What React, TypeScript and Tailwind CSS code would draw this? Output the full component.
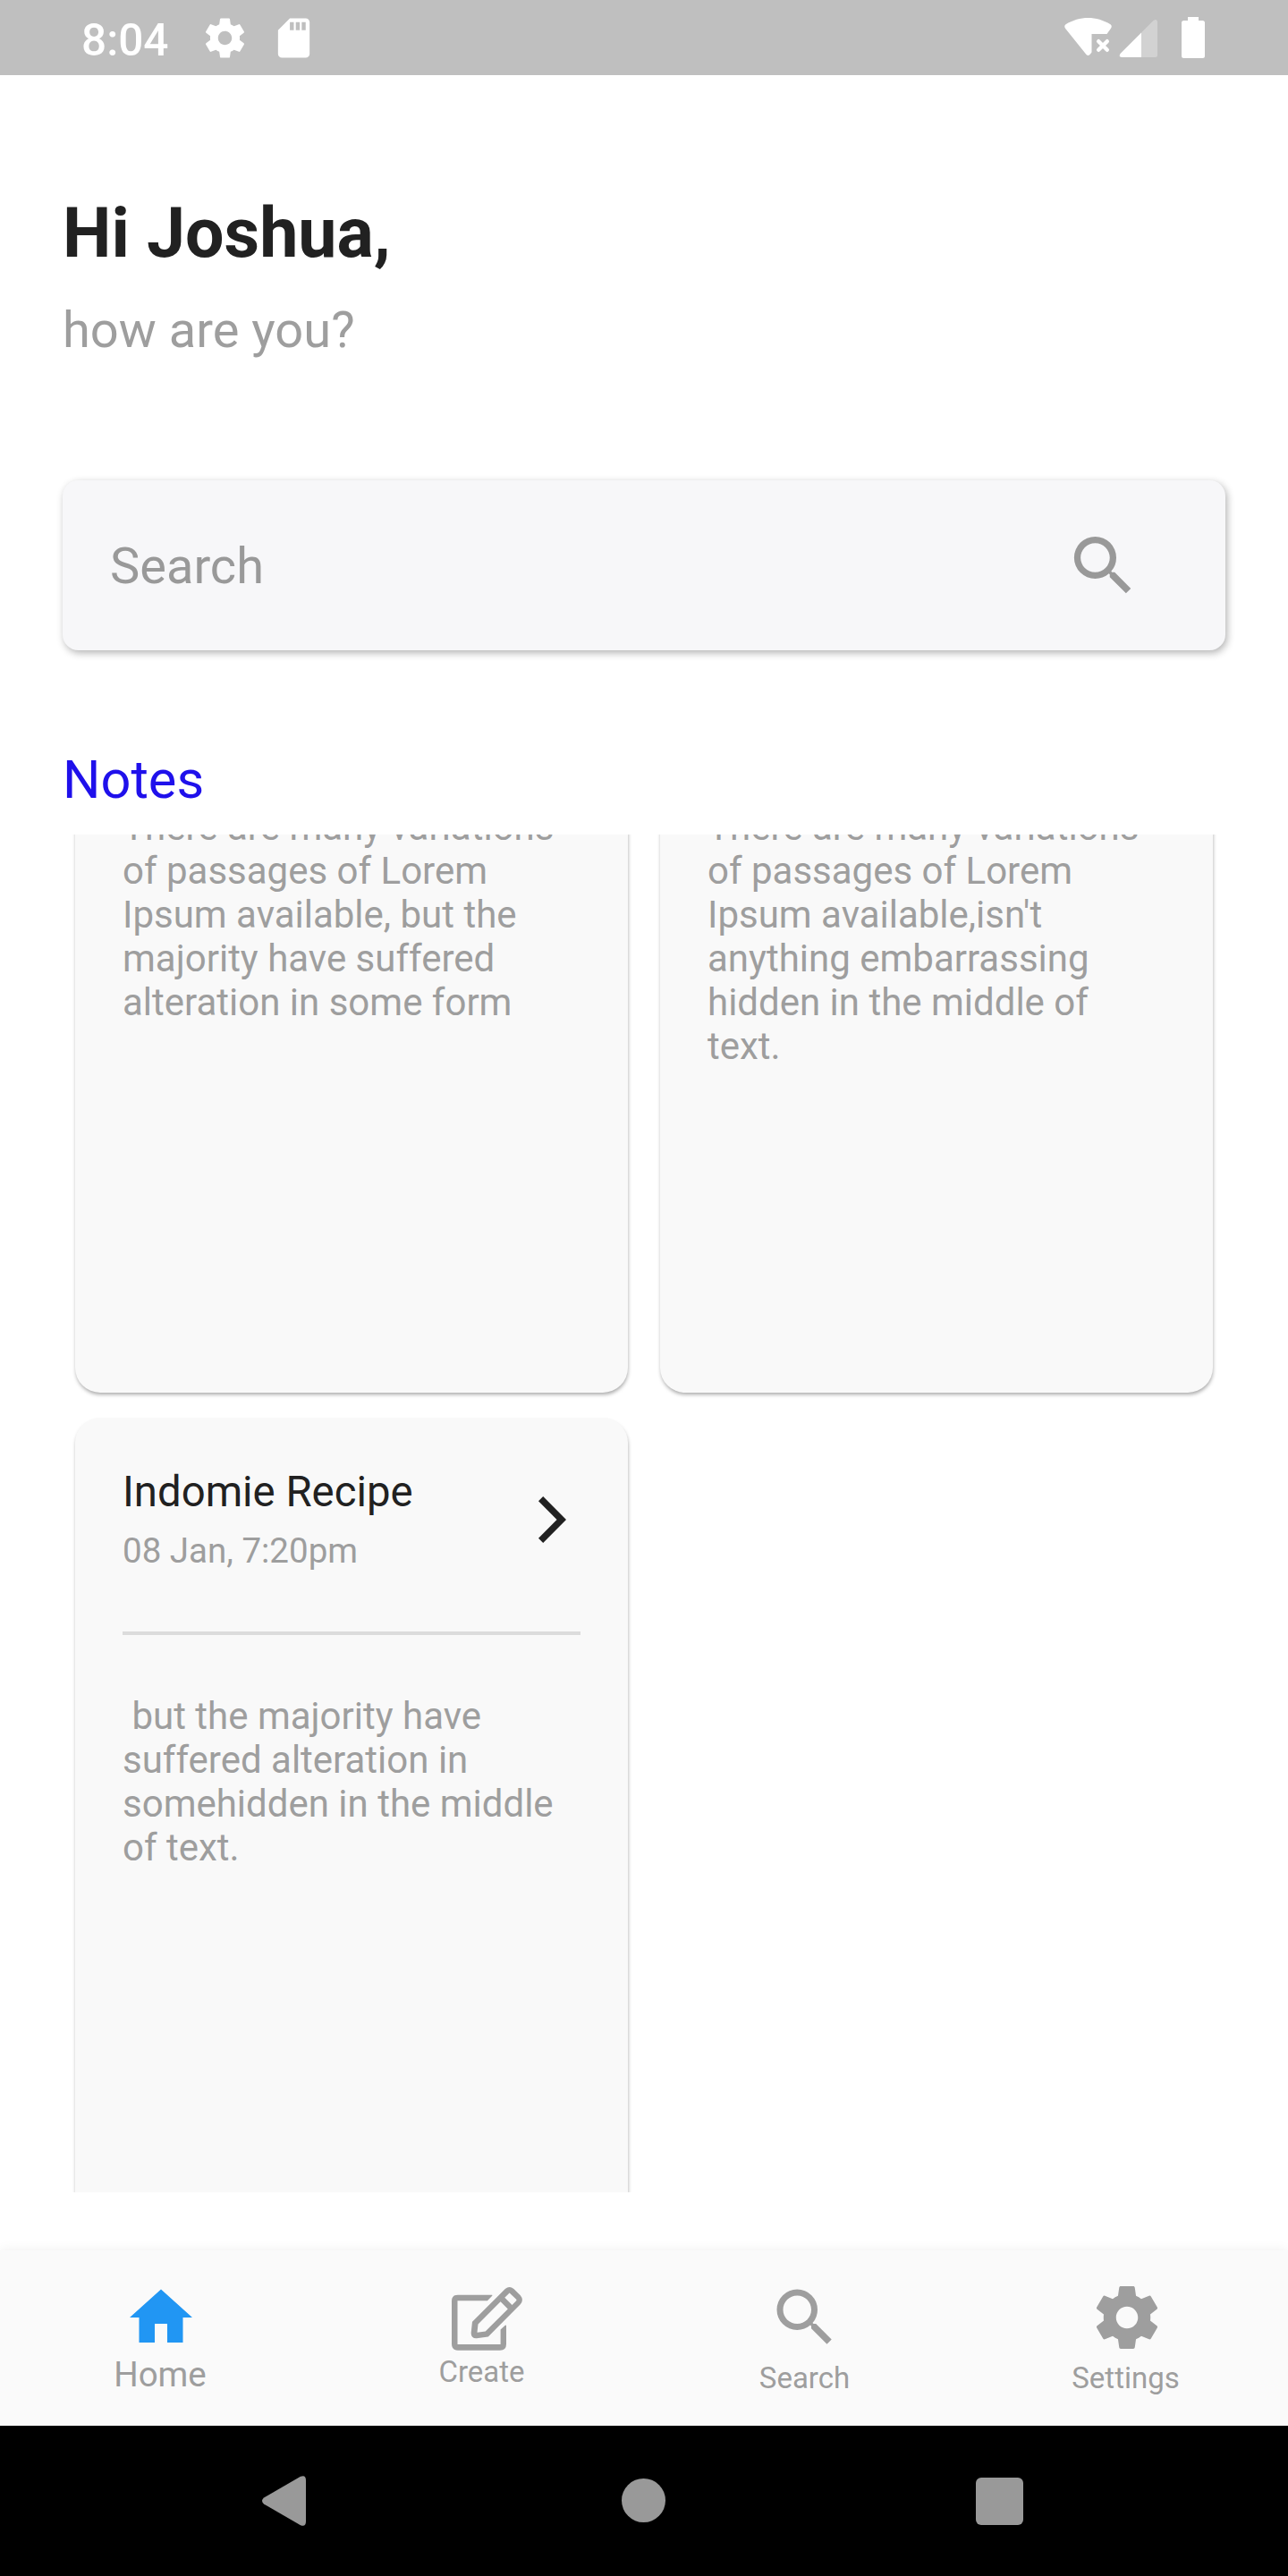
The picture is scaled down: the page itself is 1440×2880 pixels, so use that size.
import type { ReactNode } from 'react';
import { MdHome, MdSearch } from 'react-icons/md';

const GEAR =
  'M19.43 12.98c.04-.32.07-.64.07-.98s-.03-.66-.07-.98l2.11-1.65c.19-.15.24-.42.12-.64l-2-3.46c-.12-.22-.39-.3-.61-.22l-2.49 1c-.52-.4-1.08-.73-1.69-.98l-.38-2.65C14.46 2.18 14.25 2 14 2h-4c-.25 0-.46.18-.49.42l-.38 2.65c-.61.25-1.17.59-1.69.98l-2.49-1c-.23-.09-.49 0-.61.22l-2 3.46c-.13.22-.07.49.12.64l2.11 1.65c-.04.32-.07.65-.07.98s.03.66.07.98l-2.11 1.65c-.19.15-.24.42-.12.64l2 3.46c.12.22.39.3.61.22l2.49-1c.52.4 1.08.73 1.69.98l.38 2.65c.03.24.24.42.49.42h4c.25 0 .46-.18.49-.42l.38-2.65c.61-.25 1.17-.59 1.69-.98l2.49 1c.23.09.49 0 .61-.22l2-3.46c.12-.22.07-.49-.12-.64l-2.11-1.65zM12 15.5c-1.93 0-3.5-1.57-3.5-3.5s1.57-3.5 3.5-3.5 3.5 1.57 3.5 3.5-1.57 3.5-3.5 3.5z';

function GearIcon({ className }: { className: string }) {
  return (
    <svg viewBox="0 0 24 24" fill="currentColor" className={className}>
      <path d={GEAR} />
    </svg>
  );
}

function StatusBar() {
  return (
    <header className="flex h-[84px] shrink-0 items-start bg-[#bfbfbf] text-white">
      <span className="mt-[16px] ml-[91px] w-[97px] text-[49.500px] leading-[58px] font-medium whitespace-nowrap">8:04</span>
      <GearIcon className="mt-[16px] ml-[37px] size-[53px]" />
      <svg viewBox="0 0 24 24" fill="currentColor" className="mt-[16px] ml-[24px] size-[53px]">
        <path d="M18 2h-8L4.02 8 4 20c0 1.1.9 2 2 2h12c1.1 0 2-.9 2-2V4c0-1.1-.9-2-2-2zm-6 6h-2V4h2v4zm3 0h-2V4h2v4zm3 0h-2V4h2v4z" />
      </svg>
      <div className="mt-[19px] mr-[93px] ml-auto flex items-start">
        <svg viewBox="0 0 54 46" fill="currentColor" className="h-[46px] w-[54px]">
          <path d="M1.2 13C-.2 11 0 9.600 1.500 8.300C9 3.500 18 1 26.500 1C35 1 44 3.500 51.500 8.300C53 9.600 53.200 11 51.800 13L47.500 19H30.500V39.500L28.500 42Q26.500 44 24.500 42Z" />
          <path d="M38.200 27.200L47.800 36.800M47.800 27.200L38.200 36.800" stroke="currentColor" strokeWidth="4.400" strokeLinecap="round" />
        </svg>
        <svg viewBox="0 0 44 46" fill="currentColor" className="ml-[7px] h-[46px] w-[44px]">
          <path d="M25 17.600L38.500 4.100Q42 1.500 43 5V42.500Q43 45 40.500 45H25Z" opacity="0.300" />
          <path d="M25 17.600V45H3Q-.5 44.500 1.500 41.100Z" />
        </svg>
        <svg viewBox="0 0 26 46" fill="currentColor" className="ml-[26px] h-[46px] w-[26px]">
          <path d="M7 0H19V4H23.500Q26 4 26 6.500V43.500Q26 46 23.500 46H2.500Q0 46 0 43.500V6.500Q0 4 2.500 4H7Z" />
        </svg>
      </div>
    </header>
  );
}

type Note = { title?: string; date?: string; lines: string[] };

const notes: Note[] = [
  {
    lines: ['There are many variations', 'of passages of Lorem', 'Ipsum available, but the', 'majority have suffered', 'alteration in some form'],
  },
  {
    lines: ['There are many variations', 'of passages of Lorem', "Ipsum available,isn't", 'anything embarrassing', 'hidden in the middle of', 'text.'],
  },
  {
    title: 'Indomie Recipe',
    date: '08 Jan, 7:20pm',
    lines: [' but the majority have', 'suffered alteration in', 'somehidden in the middle', 'of text.'],
  },
];

function NoteCard({ note }: { note: Note }) {
  return (
    <article className="h-[966px] rounded-[28px] bg-[#f9f9f9] px-[53px] pt-[53px] shadow-[0.500px_3px_4px_-1px_rgba(0,0,0,0.35)]">
      <div className="flex h-[119px] items-center justify-between">
        <div>
          <h3 className="mt-px text-[47.300px] leading-[58px] whitespace-nowrap text-[#212121]">{note.title}</h3>
          <p className="mt-[14px] text-[38.500px] leading-[46px] whitespace-nowrap text-[#9e9e9e]">{note.date}</p>
        </div>
        <svg viewBox="0 0 31 52" fill="#212121" className="mt-[3px] mr-[16px] h-[52px] w-[31px]">
          <path d="M5.200 0L31 26L5.200 52L0 46.800L20.600 26L0 5.200Z" />
        </svg>
      </div>
      <div className="mt-[67px] h-[4px] bg-[#dcdcdc]" />
      <p className="mt-[66px] text-[42px] leading-[49px] whitespace-pre text-[#9e9e9e]">{note.lines.join('\n')}</p>
    </article>
  );
}

function CreateIcon() {
  return (
    <svg viewBox="0 0 79 71" fill="currentColor" fillRule="evenodd" className="h-[71px] w-[79px]">
      <path d="M45.200 8.700H7Q0 8.700 0 15.700V63.700Q0 70.700 7 70.700H54Q61 70.700 61 63.700V43Q60.500 42 59.500 43L54.600 47.500V63.900H6.500V15.300H39.900L45 10Q45.800 9 45.200 8.700Z" />
      <path d="M23 38.700L59.800 2Q64.600-2 69.400 2L76.800 9.200Q81 14.300 76.800 19.300L40.800 55.500L28 57.200Q21.500 57.500 21.700 51ZM54.600 16.300L62.800 24.400L37.700 49.500L28.500 50.700L29.500 41.600ZM64.600 6.400L72 13.500Q73 14.500 72 15.500L67.500 20L59.300 11.800Z" />
    </svg>
  );
}

function NavItem({ icon, label, labelClass }: { icon: ReactNode; label: string; labelClass: string }) {
  return (
    <div className="flex flex-1 flex-col items-center text-[#9e9e9e]">
      {icon}
      <span className={labelClass}>{label}</span>
    </div>
  );
}

export default function App() {
  return (
    <div className="flex h-[2880px] w-[1440px] flex-col overflow-hidden bg-white font-['Roboto',sans-serif]">
      <StatusBar />
      <main className="flex flex-1 flex-col px-[70px] pt-[131px]">
        <h1 className="text-[77.100px] leading-[92px] font-bold text-[#212121]">Hi Joshua,</h1>
        <p className="mt-[29px] text-[56px] leading-[66px] text-[#9e9e9e]">how are you?</p>
        <div className="mt-[135px] flex h-[190px] items-center justify-between rounded-[17.500px] bg-[#f7f7f9] pr-[93px] pl-[53px] text-[#999999] shadow-[2px_3px_8px_rgba(0,0,0,0.3)]">
          <span className="mt-[2px] text-[56px] leading-[66px]">Search</span>
          <MdSearch className="size-[87px]" />
        </div>
        <h2 className="mt-[110px] text-[59.500px] leading-[70px] text-[#1f10eb]">Notes</h2>
        <section className="-mx-[14px] mt-[26px] h-[1518px] overflow-hidden px-[28px]">
          <div className="-mt-[342px] grid grid-cols-2 gap-x-[36px] gap-y-[28px]">
            {notes.map((note, i) => (
              <NoteCard key={i} note={note} />
            ))}
          </div>
        </section>
      </main>
      <nav className="flex h-[196px] shrink-0 items-start bg-[#fafafa] shadow-[0_0_12px_rgba(0,0,0,0.07)]">
        <NavItem icon={<MdHome className="mt-[33px] size-[84px] text-[#2196f3]" />} label="Home" labelClass="mt-[-1px] mr-[2px] text-[38.500px] leading-[46px]" />
        <NavItem icon={<div className="mt-[41px] ml-[8px]"><CreateIcon /></div>} label="Create" labelClass="mt-[5px] mr-[3px] text-[33px] leading-[38px]" />
        <NavItem icon={<MdSearch className="mt-[33px] size-[84px]" />} label="Search" labelClass="mt-[7px] mr-[1px] text-[33px] leading-[38px]" />
        <NavItem icon={<GearIcon className="mt-[33px] size-[84px]" />} label="Settings" labelClass="mt-[7px] mr-[3px] text-[33px] leading-[38px]" />
      </nav>
      <footer className="flex h-[168px] shrink-0 items-center bg-black pl-[293px] text-[#999999]">
        <svg viewBox="0 0 49 56" fill="currentColor" className="h-[56px] w-[49px]">
          <path d="M2 24.500L43 .8Q49-1.500 49 5V51Q49 57.500 43 55.200L2 31.500Q-2 28 2 24.500Z" />
        </svg>
        <span className="mb-[1px] ml-[353px] size-[49px] rounded-full bg-[#999999]" />
        <span className="ml-[347px] size-[53px] rounded-[6px] bg-[#999999]" />
      </footer>
    </div>
  );
}
